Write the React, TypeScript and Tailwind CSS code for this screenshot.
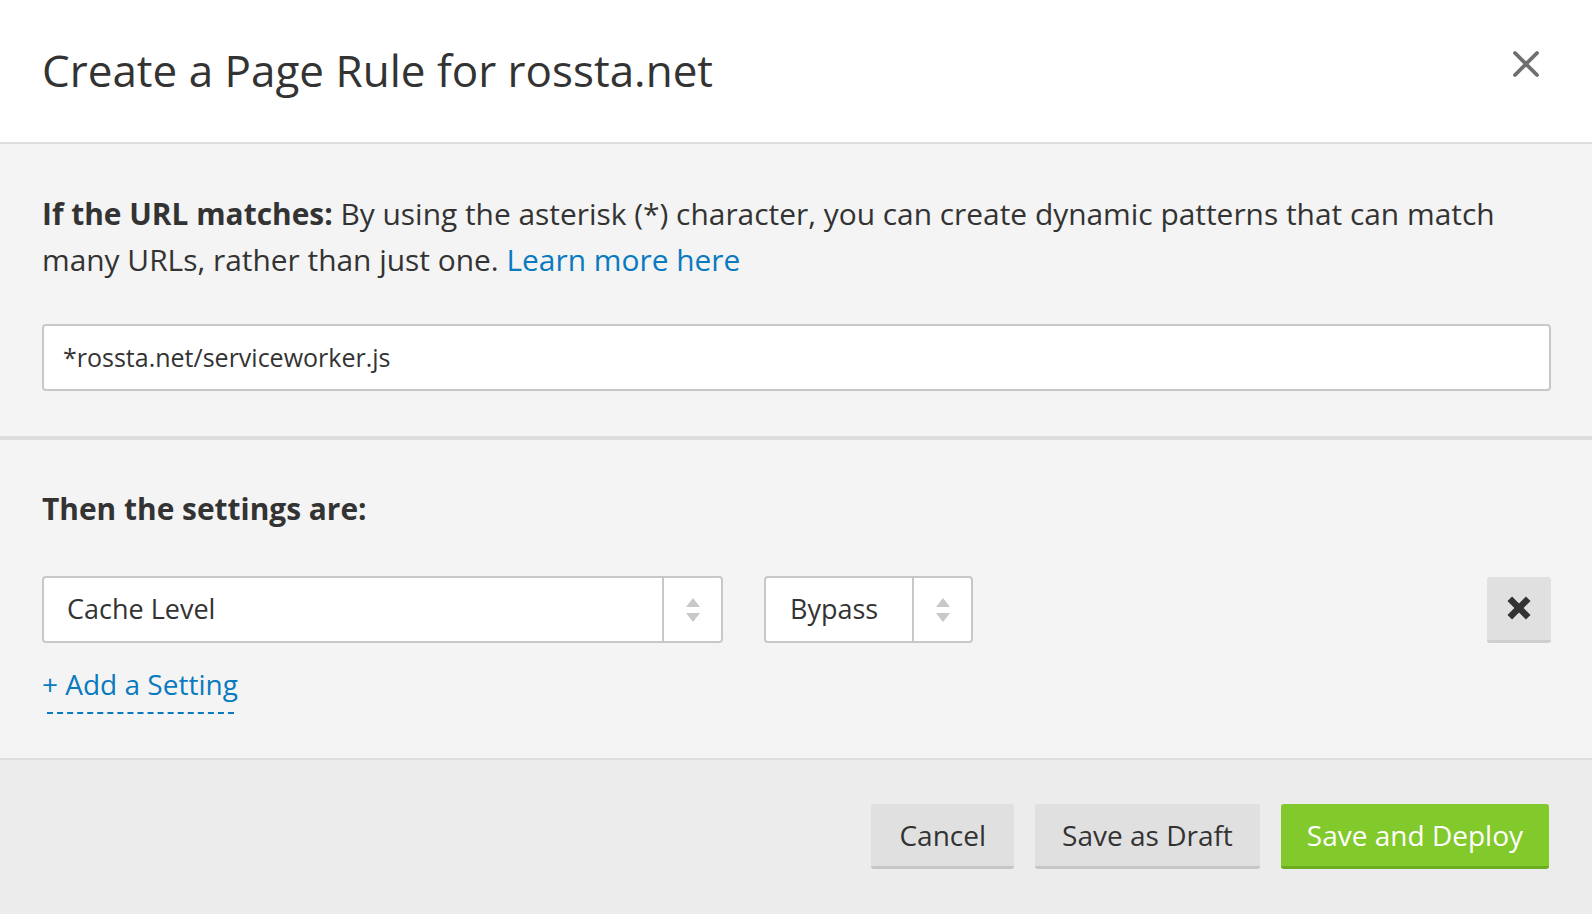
import { X } from 'lucide-react'

function Spinner() {
  return (
    <svg width="16" height="26" viewBox="0 0 16 26" className="block">
      <path d="M8 1 L15 10 L1 10 Z" fill="#c8c8c8" />
      <path d="M1 16 L15 16 L8 25 Z" fill="#c8c8c8" />
    </svg>
  )
}

function SelectBox({ label, className, padLeft }: { label: string; className: string; padLeft: string }) {
  return (
    <div className={`flex h-[67px] bg-white border-2 border-[#c8c8c8] rounded-[4px] ${className}`}>
      <div className={`flex-1 flex items-center ${padLeft} text-[27px] text-[#333]`}>{label}</div>
      <div className="w-[59px] border-l-2 border-[#c8c8c8] flex items-center justify-center">
        <Spinner />
      </div>
    </div>
  )
}

function HeavyX() {
  return (
    <svg width="30" height="30" viewBox="0 0 26 26">
      <path
        d="M3 7 L7 3 L13 9 L19 3 L23 7 L17 13 L23 19 L19 23 L13 17 L7 23 L3 19 L9 13 Z"
        fill="#333"
      />
    </svg>
  )
}

export default function App() {
  return (
    <div className="w-[1592px] h-[914px] flex flex-col bg-white text-[#333]" style={{ fontFamily: '"Open Sans", "Noto Sans", sans-serif' }}>
      <div className="h-[144px] flex items-center justify-between pl-[42px] pr-[44px] border-b-2 border-[#dddddd] shrink-0">
        <h1 className="text-[44px] font-normal text-[#333] leading-none -mt-[2px]">Create a Page Rule for rossta.net</h1>
        <X size={44} strokeWidth={2.1} color="#6f6f6f" className="-mt-[14px]" />
      </div>

      <div className="bg-[#f4f4f4] pl-[42px] pr-[41px] pt-[47px] pb-[45px] border-b-4 border-[#dddddd] shrink-0">
        <p className="text-[29.9px] leading-[46px] text-[#333]">
          <span className="font-bold">If the URL matches:</span> By using the asterisk (*) character, you can create dynamic patterns that can match many URLs, rather than just one.{' '}
          <span className="text-[#0a7ac0]">Learn more here</span>
        </p>
        <div className="mt-[41px] h-[67px] bg-white border-2 border-[#c8c8c8] rounded-[4px] flex items-center pl-[19px] text-[25px] text-[#333]">
          *rossta.net/serviceworker.js
        </div>
      </div>

      <div className="bg-[#f4f4f4] pl-[42px] pr-[41px] pt-[46px] pb-[44px] border-b-2 border-[#dddddd] shrink-0">
        <h2 className="text-[29.9px] font-bold leading-[46px]">Then the settings are:</h2>
        <div className="mt-[44px] flex items-center">
          <SelectBox label="Cache Level" className="w-[681px]" padLeft="pl-[23px]" />
          <SelectBox label="Bypass" className="w-[209px] ml-[41px]" padLeft="pl-[24px]" />
          <div className="flex-1" />
          <button className="w-[64px] h-[66px] bg-[#e0e0e0] border-b-[3px] border-[#cfcfcf] rounded-[3px] flex items-center justify-center">
            <HeavyX />
          </button>
        </div>
        <div className="mt-[21px] text-[28px] leading-[40px] text-[#0a7ac0]">+ Add a Setting</div>
        <div className="mt-[8px] ml-[5px] w-[187px] border-t-2 border-dashed border-[#0a7ac0]" />
      </div>

      <div className="flex-1 bg-[#ececec] flex items-start justify-end pr-[43px] pt-[44px] gap-[21px]">
        <button className="h-[65px] px-[28px] bg-[#e0e0e0] border-b-[3px] border-[#c6c6c6] rounded-[3px] text-[28px] text-[#333]">Cancel</button>
        <button className="h-[65px] px-[27px] bg-[#e0e0e0] border-b-[3px] border-[#c6c6c6] rounded-[3px] text-[28px] text-[#333]">Save as Draft</button>
        <button className="h-[65px] px-[26px] bg-[#82c92b] border-b-[3px] border-[#6cad1f] rounded-[3px] text-[28px] text-white">Save and Deploy</button>
      </div>
    </div>
  )
}
